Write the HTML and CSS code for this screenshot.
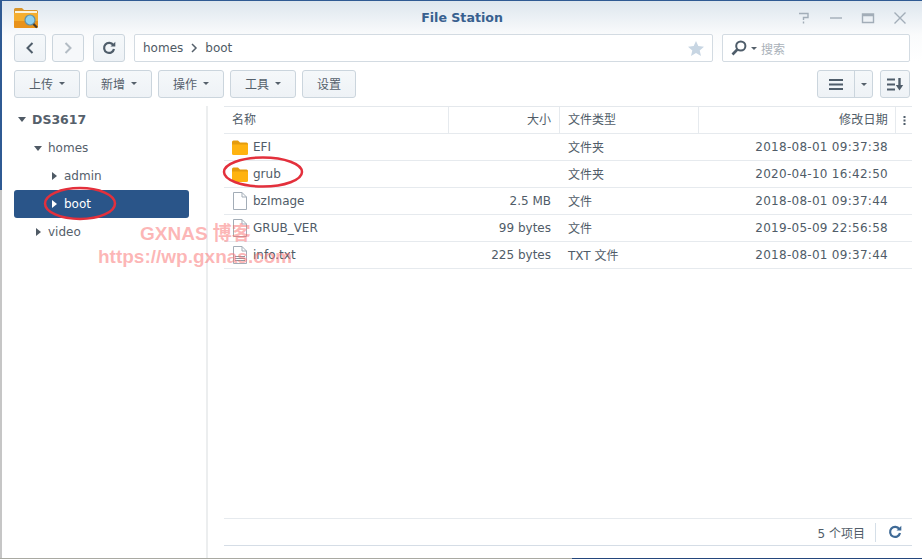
FILE: index.html
```html
<!DOCTYPE html>
<html lang="zh">
<head>
<meta charset="utf-8">
<title>File Station</title>
<link rel="stylesheet" href="styles.css">
</head>
<body>
<div class="window">
  <div class="inner">
    <header class="titlebar">
      <div class="title-left">
        <svg class="app-icon" width="24" height="22" viewBox="0 0 24 22">
          <path d="M0 2.500Q0 1 1.500 1H8L10 3H22.500Q24 3 24 4.500V7H0Z" fill="#d9952a"/>
          <rect x="1" y="4" width="22" height="3" fill="#fbf3dc"/>
          <path d="M0 6H24V19.500Q24 21 22.500 21H1.500Q0 21 0 19.500Z" fill="#f5ae2e"/>
          <path d="M0 14H24V19.500Q24 21 22.500 21H1.500Q0 21 0 19.500Z" fill="#e8921a"/>
          <circle cx="16" cy="13" r="5" fill="#8fd0ee" stroke="#5f91a8" stroke-width="1.200"/>
          <path d="M19.500 17L23 20.500" stroke="#4a3a28" stroke-width="2.200"/>
        </svg>
      </div>
      <h1 class="title">File Station</h1>
      <div class="win-controls">
        <svg width="14" height="14" viewBox="0 0 14 14"><path d="M2 2.500H11V6.500H6.500V9M6.500 10.500V12.500" class="ctl"/></svg>
        <svg width="14" height="14" viewBox="0 0 14 14"><path d="M1 7H13" class="ctl"/></svg>
        <svg width="14" height="14" viewBox="0 0 14 14"><path d="M1.500 3H12.500V11.500H1.500ZM1.500 4.500H12.500" class="ctl"/></svg>
        <svg width="14" height="14" viewBox="0 0 14 14"><path d="M1.500 1.500L12.500 12.500M12.500 1.500L1.500 12.500" class="ctl"/></svg>
      </div>
    </header>

    <div class="navrow">
      <button class="btn square">
        <svg width="12" height="14" viewBox="0 0 12 14"><path d="M8.500 2L3.500 7L8.500 12" class="chev dark"/></svg>
      </button>
      <button class="btn square next">
        <svg width="12" height="14" viewBox="0 0 12 14"><path d="M3.500 2L8.500 7L3.500 12" class="chev light"/></svg>
      </button>
      <button class="btn square refresh">
        <svg width="14" height="14" viewBox="0 0 14 14"><path d="M11.300 4.200A5 5 0 1 0 12 8" class="ring"/><path d="M8.500 5.500H13.300V0.800Z" fill="#4f5d6a"/></svg>
      </button>
      <div class="pathbar">
        <span class="crumb">homes</span>
        <svg width="8" height="10" viewBox="0 0 8 10"><path d="M2 1L6 5L2 9" class="crumb-sep"/></svg>
        <span class="crumb">boot</span>
        <svg class="star" width="16" height="15" viewBox="0 0 16 15"><path d="M8 0L10.300 5.100L16 5.700L11.700 9.400L13 15L8 12.100L3 15L4.300 9.400L0 5.700L5.700 5.100Z" fill="#c8d6e3"/></svg>
      </div>
      <div class="searchbar">
        <svg width="16" height="16" viewBox="0 0 16 16"><circle cx="9.800" cy="6" r="4.600" class="lens"/><path d="M6.300 9.500L1.500 14.500" class="handle"/></svg>
        <span class="caret"></span>
        <span class="placeholder">搜索</span>
      </div>
    </div>

    <div class="toolrow">
      <button class="btn menu">上传<span class="caret"></span></button>
      <button class="btn menu">新增<span class="caret"></span></button>
      <button class="btn menu">操作<span class="caret"></span></button>
      <button class="btn menu">工具<span class="caret"></span></button>
      <button class="btn plain">设置</button>
      <div class="tool-right">
        <div class="split">
          <button class="split-main">
            <svg width="14" height="11" viewBox="0 0 14 11"><path d="M0 1H14M0 5.500H14M0 10H14" class="bars"/></svg>
          </button>
          <button class="split-arrow"><span class="caret"></span></button>
        </div>
        <button class="btn sort">
          <svg width="17" height="13" viewBox="0 0 17 13"><path d="M0 1.500H8M0 6.500H8M0 11.500H8" class="bars"/><path d="M12.500 0V8" class="bars thick"/><path d="M8.800 7H16.200L12.500 12.500Z" fill="#4f5d6a"/></svg>
        </button>
      </div>
    </div>

    <div class="content">
      <nav class="sidebar">
        <div class="node root"><span class="arrow down"></span>DS3617</div>
        <div class="node lvl1"><span class="arrow down"></span>homes</div>
        <div class="node lvl2"><span class="arrow right"></span>admin</div>
        <div class="node lvl2 selected"><span class="arrow right"></span>boot</div>
        <div class="node lvl1b"><span class="arrow right"></span>video</div>
      </nav>
      <main class="main">
        <div class="table">
          <div class="row head">
            <div class="cell name cjk">名称</div>
            <div class="cell size cjk">大小</div>
            <div class="cell type cjk">文件类型</div>
            <div class="cell date cjk">修改日期</div>
            <div class="cell more"><svg width="3" height="9" viewBox="0 0 3 9"><path d="M0.500 0H2.500V2H0.500ZM0.500 3.500H2.500V5.500H0.500ZM0.500 7H2.500V9H0.500Z" fill="#4f5d6a"/></svg></div>
          </div>
          <div class="row">
            <div class="cell name"><svg class="ficon" width="16" height="15" viewBox="0 0 16 15"><use href="#folder"/></svg>EFI</div>
            <div class="cell size"></div>
            <div class="cell type">文件夹</div>
            <div class="cell date">2018-08-01 09:37:38</div>
          </div>
          <div class="row">
            <div class="cell name"><svg class="ficon" width="16" height="15" viewBox="0 0 16 15"><use href="#folder"/></svg>grub</div>
            <div class="cell size"></div>
            <div class="cell type">文件夹</div>
            <div class="cell date">2020-04-10 16:42:50</div>
          </div>
          <div class="row">
            <div class="cell name"><svg class="ficon" width="16" height="18" viewBox="0 0 16 18"><use href="#doc"/></svg>bzImage</div>
            <div class="cell size">2.5 MB</div>
            <div class="cell type">文件</div>
            <div class="cell date">2018-08-01 09:37:44</div>
          </div>
          <div class="row">
            <div class="cell name"><svg class="ficon" width="16" height="18" viewBox="0 0 16 18"><use href="#doc"/></svg>GRUB_VER</div>
            <div class="cell size">99 bytes</div>
            <div class="cell type">文件</div>
            <div class="cell date">2019-05-09 22:56:58</div>
          </div>
          <div class="row">
            <div class="cell name"><svg class="ficon" width="16" height="18" viewBox="0 0 16 18"><use href="#doc"/><path d="M3 10.500H13M3 12.500H13M3 14.500H13" stroke="#8d97a1" fill="none"/></svg>info.txt</div>
            <div class="cell size">225 bytes</div>
            <div class="cell type">TXT 文件</div>
            <div class="cell date">2018-08-01 09:37:44</div>
          </div>
        </div>
        <footer class="statusbar">
          <span class="count">5 个项目</span>
          <span class="status-sep"></span>
          <svg width="14" height="14" viewBox="0 0 14 14"><path d="M11.300 4.200A5 5 0 1 0 12 8" class="ring blue"/><path d="M8.500 5.500H13.300V0.800Z" fill="#3f6a96"/></svg>
        </footer>
      </main>
    </div>
  </div>

  <svg class="overlay" width="922" height="559" viewBox="0 0 922 559">
    <ellipse cx="263" cy="172" rx="39" ry="14.500" class="ring-mark"/>
    <ellipse cx="80" cy="203.500" rx="35" ry="15.500" class="ring-mark"/>
    <text x="140" y="240" class="wm">GXNAS 博客</text>
    <text x="98" y="263" class="wm">https://wp.gxnas.com</text>
  </svg>

  <svg class="defs" width="0" height="0">
    <defs>
      <g id="folder">
        <path d="M0 2Q0 0.500 1.500 0.500H6L8 2.500H14.500Q16 2.500 16 4V5H0Z" fill="#e59c0c"/>
        <path d="M0 4.500H16V13.500Q16 15 14.500 15H1.500Q0 15 0 13.500Z" fill="#ffb310"/>
      </g>
      <g id="doc">
        <path d="M1.500 0.500H10L14.500 5V17.500H1.500Z" fill="#fff" stroke="#a3adb7"/>
        <path d="M10 0.500V5H14.500" fill="none" stroke="#a3adb7"/>
      </g>
    </defs>
  </svg>
</div>
</body>
</html>
```

FILE: styles.css
```css
* { box-sizing: border-box; }
html, body { margin: 0; height: 100%; background: #fff; }
body {
  font-family: "DejaVu Sans", "Noto Sans CJK SC", sans-serif;
  font-size: 12px;
  color: #505c68;
  overflow: hidden;
}
.window {
  position: relative;
  width: 922px;
  height: 559px;
  padding: 1px 0 1px 2px;
  background:
    linear-gradient(90deg, #a9a9a2 572px, #24467c 572px) left bottom / 100% 1px no-repeat,
    linear-gradient(#2f5a93 190px, #c6c6c6 190px);
  overflow: hidden;
}
.inner {
  display: flex;
  flex-direction: column;
  height: 100%;
  background: linear-gradient(#dde6ee 0, #fafbfc 34px, #fff 60px);
}
.titlebar {
  flex: none;
  display: grid;
  grid-template-columns: 1fr auto 1fr;
  align-items: center;
  height: 33px;
  padding: 0 12px;
}
.title-left { display: flex; align-items: center; }
.app-icon { display: block; margin-top: 1px; }
.title {
  margin: 0;
  font-size: 12.600px;
  font-weight: 700;
  color: #38608f;
}
.win-controls {
  display: flex;
  justify-content: flex-end;
  align-items: center;
  gap: 18px;
  padding-right: 3px;
}
.ctl { fill: none; stroke: #a2adb8; stroke-width: 1.400; }

.navrow, .toolrow {
  flex: none;
  display: flex;
  height: 28px;
  padding-left: 12px;
}
.navrow { gap: 6px; }
.toolrow { gap: 6px; margin-top: 8px; padding-right: 12px; }

.btn {
  display: flex;
  align-items: center;
  justify-content: center;
  height: 28px;
  padding: 0;
  border: 1px solid #cbd5dd;
  border-radius: 3px;
  background: linear-gradient(#f5f8fa, #eef2f6);
  font: inherit;
  color: #55606b;
}
.menu, .plain { padding-bottom: 2px; }
.square { width: 32px; }
.next { background: #f6f8fa; }
.refresh { margin-left: 3px; }
.chev { fill: none; stroke-width: 2; }
.chev.dark { stroke: #4f5d6a; }
.chev.light { stroke: #b3bcc4; }
.ring { fill: none; stroke: #4f5d6a; stroke-width: 2.200; }
.ring.blue { stroke: #3f6a96; }

.pathbar, .searchbar {
  display: flex;
  align-items: center;
  height: 28px;
  border: 1px solid #d3dbe2;
  border-radius: 2px;
  background: #fff;
}
.pathbar {
  width: 579px;
  margin-left: 3px;
  padding: 0 8px;
  gap: 7px;
}
.crumb { color: #4f5a65; }
.crumb-sep { fill: none; stroke: #55606b; stroke-width: 1.500; }
.star { margin-left: auto; }
.searchbar {
  width: 188px;
  margin-left: 3px;
  padding-left: 8px;
  gap: 4px;
}
.lens { fill: none; stroke: #4f5d6a; stroke-width: 2; }
.handle { fill: none; stroke: #4f5d6a; stroke-width: 2.600; }
.placeholder { margin-left: 0; color: #a9b1b9; }
.caret {
  display: inline-block;
  width: 0;
  height: 0;
  border-left: 3px solid transparent;
  border-right: 3px solid transparent;
  border-top: 3px solid #55606b;
}

.menu { width: 66px; gap: 6px; }
.plain { width: 54px; }
.tool-right { display: flex; gap: 7px; margin-left: auto; }
.split {
  display: flex;
  width: 56px;
  height: 28px;
  border: 1px solid #cbd5dd;
  border-radius: 3px;
  overflow: hidden;
  background: linear-gradient(#f5f8fa, #eef2f6);
}
.split-main, .split-arrow {
  display: flex;
  align-items: center;
  justify-content: center;
  padding: 0;
  border: 0;
  background: none;
}
.split-main { width: 37px; border-right: 1px solid #cbd5dd; }
.split-arrow { flex: 1; }
.bars { fill: none; stroke: #4f5d6a; stroke-width: 1.800; }
.bars.thick { stroke-width: 2.400; }
.sort { width: 30px; }

.content {
  flex: 1;
  display: flex;
  min-height: 0;
  margin-top: 8px;
}
.sidebar {
  flex: none;
  width: 204px;
  padding-left: 12px;
  padding-right: 17px;
}
.node {
  display: flex;
  align-items: center;
  height: 28px;
  border-radius: 3px;
  color: #55606b;
}
.root { padding: 0 0 2px 4px; font-weight: 700; font-size: 12.500px; }
.lvl1 { padding-left: 20px; }
.lvl2 { padding-left: 38px; }
.lvl1b { padding-left: 22px; }
.selected {
  padding-bottom: 1px;
  background: #2a5589;
  color: #fff;
  font-weight: 500;
}
.arrow {
  flex: none;
  width: 0;
  height: 0;
  border-style: solid;
  border-color: transparent;
}
.arrow.down {
  border-width: 5px 4.500px 0;
  border-top-color: #4f5a65;
  margin-right: 6px;
}
.arrow.right {
  border-width: 4.500px 0 4.500px 5px;
  border-left-color: #4f5a65;
  margin-right: 7px;
}
.selected .arrow.right { border-left-color: #fff; }

.main {
  flex: 1;
  display: flex;
  flex-direction: column;
  min-width: 0;
  padding: 0 10px 12px 16px;
  border-left: 2px solid #eceeef;
}
.table { flex: 1; border-top: 1px solid #e4e8ec; }
.row {
  display: grid;
  grid-template-columns: 224px 111px 139px 197px 17px;
  height: 27px;
  border-bottom: 1px solid #e6eaee;
  align-items: center;
}
.cell {
  display: flex;
  align-items: center;
  height: 100%;
  min-width: 0;
  padding: 0 8px;
  white-space: nowrap;
}
.type { padding: 0 8px 1px 9px; }
.cjk { padding-bottom: 3px; }
.head .cell + .cell { border-left: 1px solid #e6eaee; }
.head .type { padding-left: 8px; }
.name { gap: 5px; }
.size, .date { justify-content: flex-end; }
.date { padding-right: 7px; letter-spacing: 0.280px; }
.more { justify-content: center; padding: 0; }
.ficon { flex: none; display: block; }

.statusbar {
  flex: none;
  display: flex;
  align-items: center;
  justify-content: flex-end;
  height: 28px;
  padding-right: 10px;
  border-top: 1px solid #e6eaee;
  border-bottom: 1px solid #d5dde6;
}
.count { color: #505c68; }
.status-sep {
  width: 1px;
  height: 19px;
  margin: 0 12px 0 10px;
  background: #d5dfe8;
}

.overlay { position: absolute; left: 0; top: 0; pointer-events: none; }
.ring-mark { fill: none; stroke: #e3303c; stroke-width: 2.500; }
.wm {
  font-family: "Liberation Sans", "Noto Sans CJK SC", sans-serif;
  font-size: 19px;
  font-weight: 700;
  fill: rgba(250, 110, 110, 0.5);
}
.defs { position: absolute; }
```
